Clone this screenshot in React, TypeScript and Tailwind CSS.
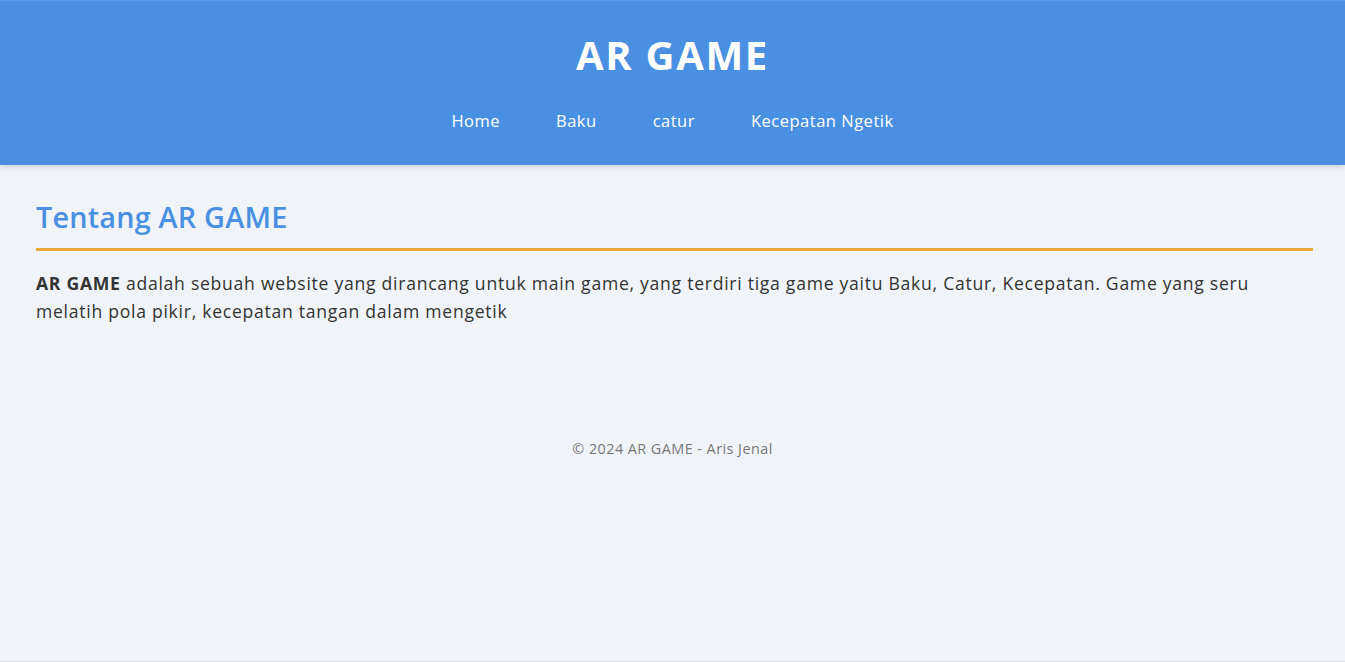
import React from "react";

export default function App() {
  const font = { fontFamily: '"Open Sans", "Liberation Sans", sans-serif' };
  return (
    <div className="min-h-[662px] bg-[#f0f4f8] flex flex-col border-b border-[#dcdfe3]" style={font}>
      <header className="bg-[#4a90e2] border-t border-[#5b9be6] pt-[24px] pb-[32px] shadow-[0_2px_6px_rgba(0,0,0,0.15)] text-white text-center">
        <h1 className="text-[40px] leading-[60px] font-bold tracking-[1.7px] m-0">AR GAME</h1>
        <nav className="mt-[24px] flex justify-center gap-[56px] text-[16.5px] leading-[24px] font-medium tracking-[0.5px]">
          <a href="#">Home</a>
          <a href="#">Baku</a>
          <a href="#">catur</a>
          <a href="#">Kecepatan Ngetik</a>
        </nav>
      </header>
      <main className="pl-[36px] pr-[32px] pt-[34px]">
        <h2 className="text-[28.8px] leading-[36px] font-semibold text-[#4a90e2] pb-[13px] border-b-[3px] border-[#e8a838] tracking-[0.2px]">
          Tentang AR GAME
        </h2>
        <p className="mt-[18px] pr-[20px] text-[17.6px] leading-[28px] text-[#333333] tracking-[0.72px]">
          <b className="font-bold">AR GAME</b> adalah sebuah website yang dirancang untuk main game, yang terdiri tiga game yaitu Baku, Catur, Kecepatan. Game yang seru melatih pola pikir, kecepatan tangan dalam mengetik
        </p>
      </main>
      <footer className="mt-[112px] text-center text-[14.4px] leading-[24px] text-[#777777] tracking-[0.45px]">
        © 2024 AR GAME - Aris Jenal
      </footer>
    </div>
  );
}
